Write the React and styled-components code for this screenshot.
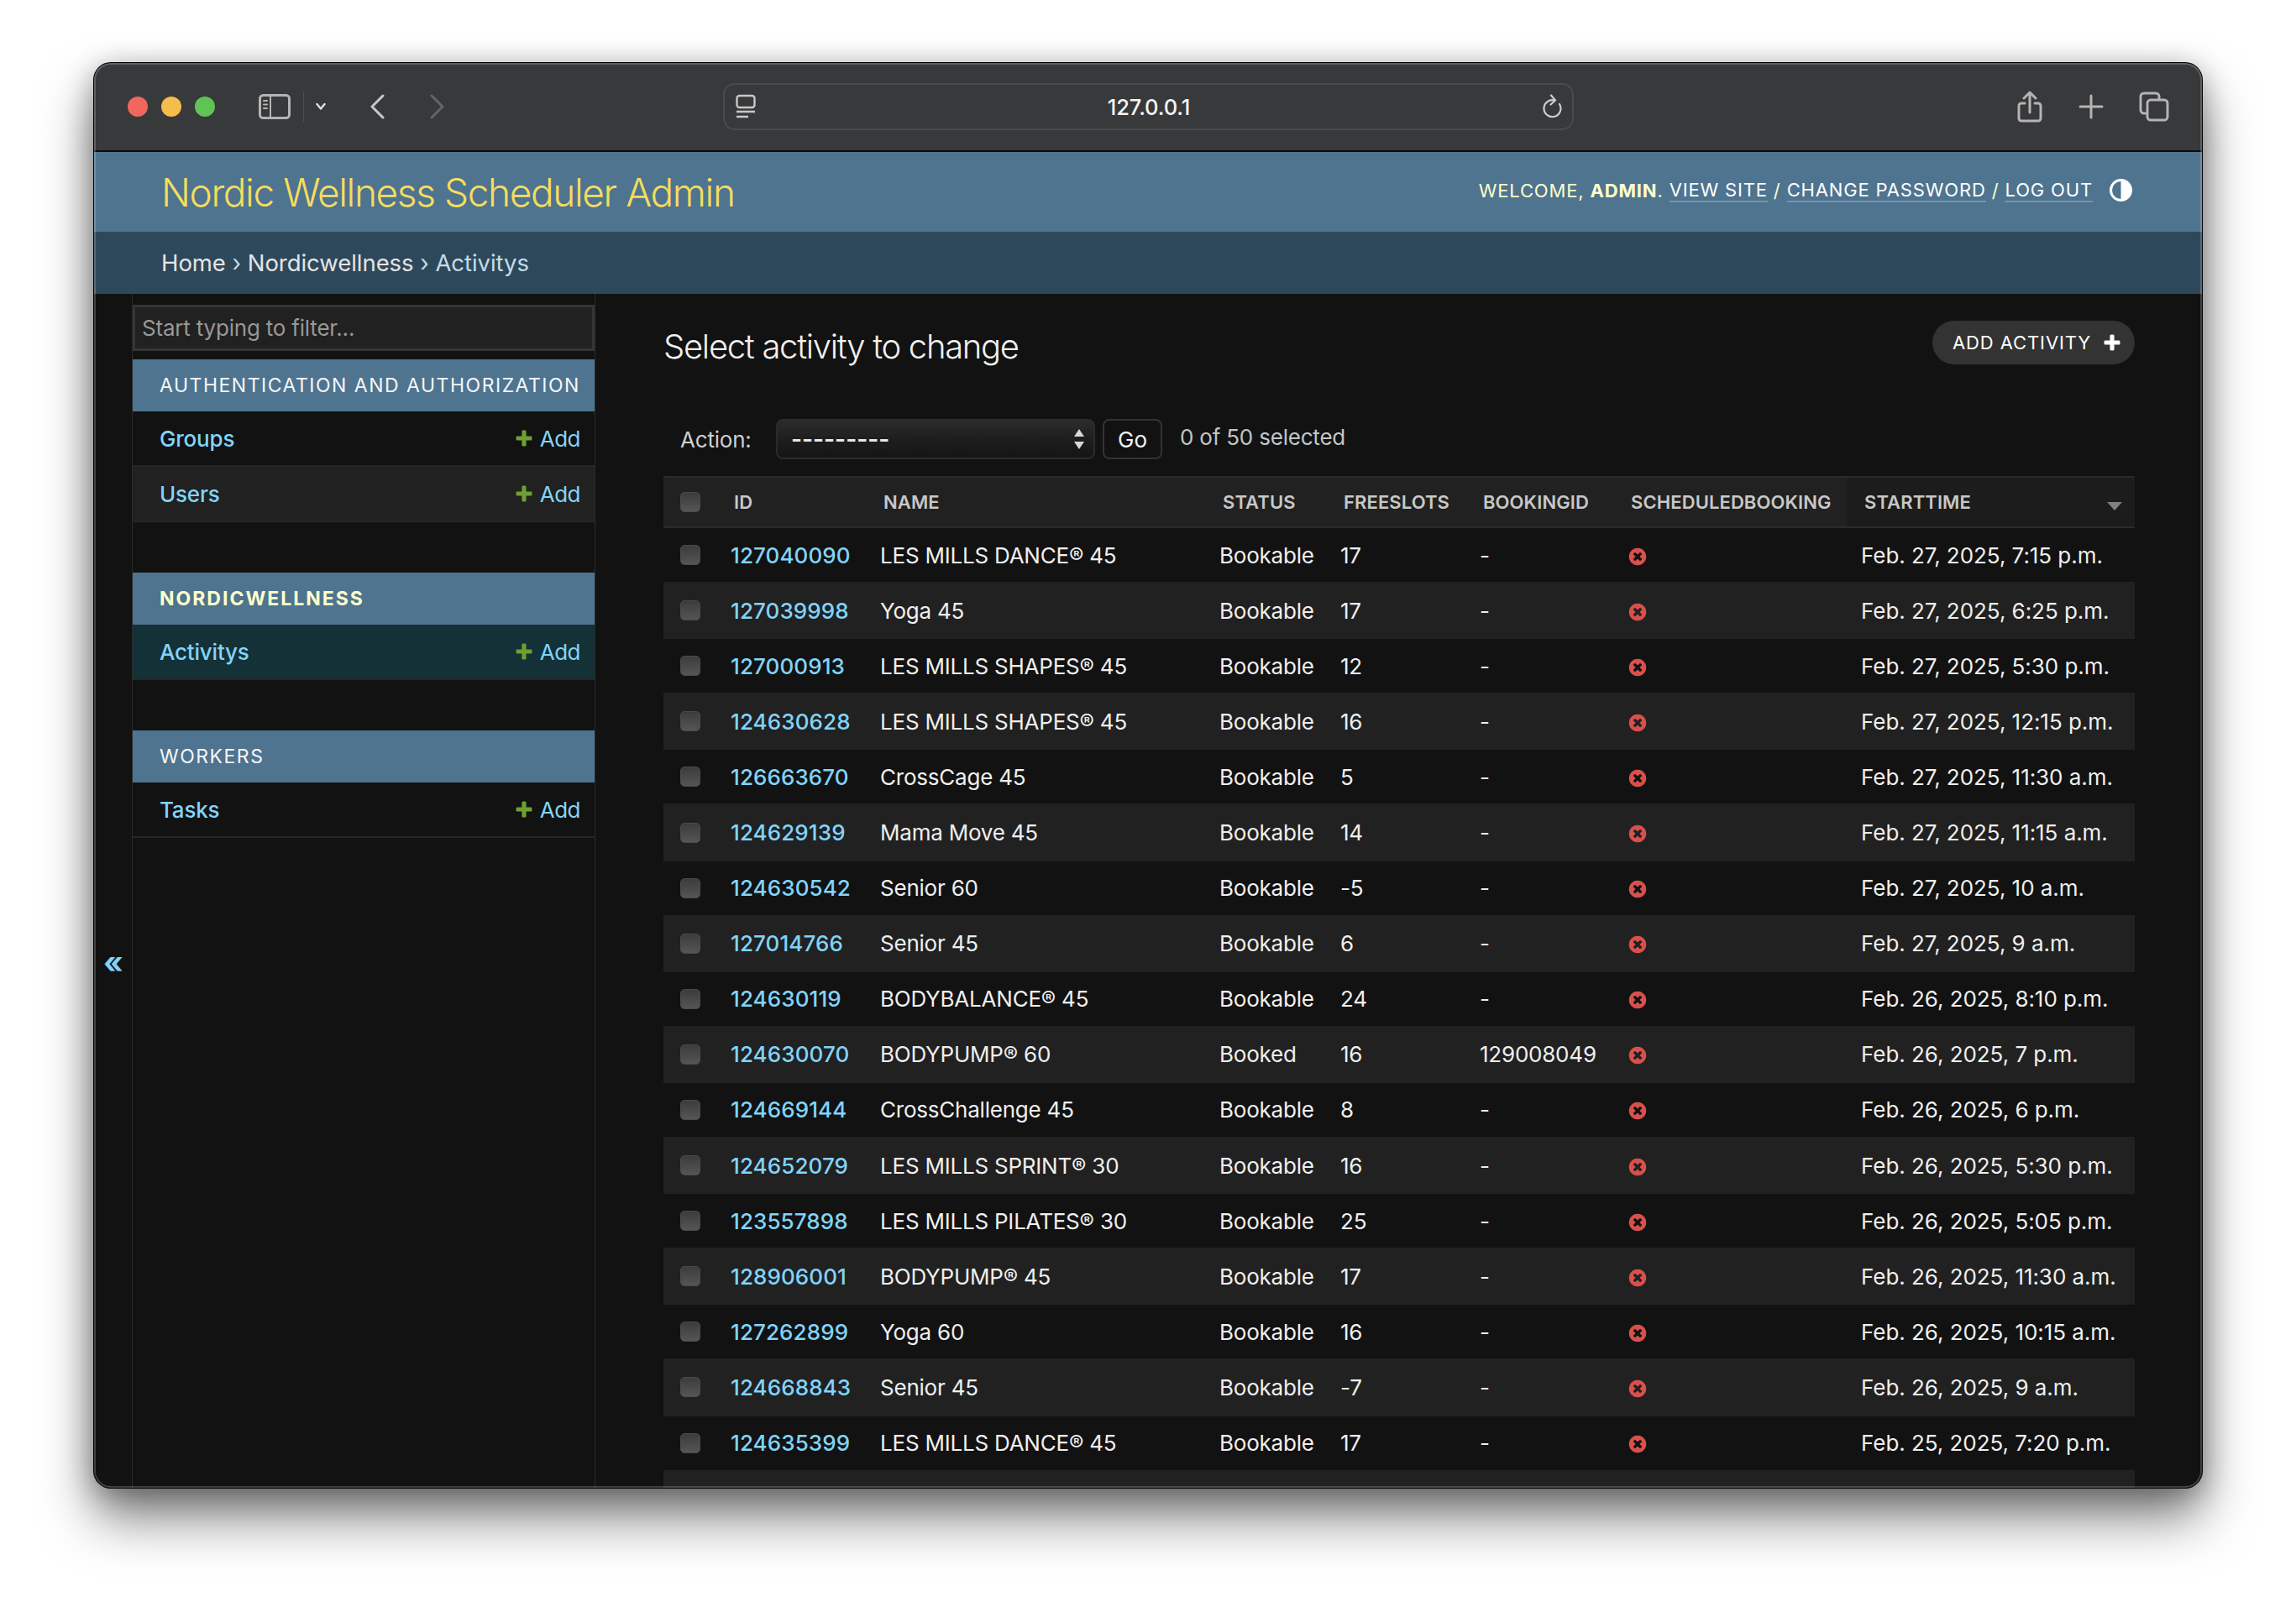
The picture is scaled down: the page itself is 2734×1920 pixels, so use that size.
import React from 'react';
import styled, { createGlobalStyle } from 'styled-components';

const GlobalStyle = createGlobalStyle`
  html, body {
    margin: 0;
    background: #fff;
  }
  body {
    font-family: Inter, "Noto Sans", "Liberation Sans", sans-serif;
    overflow: hidden;
  }
  * {
    box-sizing: border-box;
  }
`;

const Page = styled.div`
  width: 2734px;
  height: 1920px;
  padding: 75px 112px 0;
`;

const BrowserWindow = styled.div`
  height: 1697px;
  display: flex;
  flex-direction: column;
  position: relative;
  background: #121212;
  border-radius: 20px;
  overflow: hidden;
  box-shadow: 0 0 0 1px #000, 0 36px 62px rgba(0, 0, 0, 0.5), 0 6px 34px rgba(0, 0, 0, 0.32);

  /* thin light rim over the content */
  &::after {
    content: '';
    position: absolute;
    inset: 0;
    border: 2px solid rgba(255, 255, 255, 0.2);
    border-radius: 20px;
    pointer-events: none;
  }
`;

/* safari chrome */
const Toolbar = styled.div`
  height: 106px;
  flex: none;
  display: flex;
  align-items: center;
  background: #38393b;
  border-bottom: 2px solid #0c0c0c;
  padding-left: 40px;
`;

const Light = styled.span`
  width: 24px;
  height: 24px;
  border-radius: 50%;
  margin-right: 16px;
  background: ${(p) => p.$color};
`;

const ToolIcon = styled.svg`
  flex: none;
  display: block;
  margin-left: ${(p) => p.$left || 0}px;
  fill: none;
  stroke: ${(p) => p.$stroke || '#b4b4b5'};
  stroke-width: ${(p) => p.$weight || 3};
  stroke-linecap: round;
  stroke-linejoin: round;
`;

const Divider = styled.span`
  width: 1px;
  height: 36px;
  background: #4d4e50;
  margin-left: 15px;
`;

const UrlBar = styled.div`
  width: 1013px;
  height: 56px;
  margin-left: 331px;
  flex: none;
  display: flex;
  align-items: center;
  justify-content: space-between;
  padding: 0 12px 0 13px;
  border: 2px solid #4a4b4d;
  border-radius: 14px;
`;

const UrlText = styled.span`
  color: #f4f4f4;
  font-size: 25.500px;
  font-weight: 500;
  letter-spacing: -0.1px;
`;

/* django header */
const Header = styled.header`
  height: 95px;
  flex: none;
  display: flex;
  align-items: center;
  justify-content: space-between;
  padding: 0 83px 0 80px;
  background: #4f748f;
`;

const Brand = styled.h1`
  margin: 0;
  color: #f5dd5d;
  font-size: 46px;
  font-weight: 300;
  letter-spacing: -1.4px;
`;

const UserTools = styled.div`
  display: flex;
  align-items: center;
  color: #ffc;
  font-size: 22px;
  font-weight: 400;
  letter-spacing: 0.84px;
  text-transform: uppercase;
  white-space: pre;
  padding-bottom: 4px;
`;

const Strong = styled.strong`
  font-weight: 700;
`;

const ToolLink = styled.a`
  color: #fff;
  border-bottom: 2px solid #7594ab;
`;

const ThemeToggle = styled.svg`
  margin-left: 20px;
  width: 27px;
  height: 27px;
`;

const Breadcrumbs = styled.nav`
  height: 74px;
  flex: none;
  display: flex;
  align-items: center;
  padding-left: 80px;
  background: #2e485b;
  color: #c4dce8;
  font-size: 27.500px;
  letter-spacing: -0.05px;
  white-space: pre;
`;

const Crumb = styled.a`
  color: #e4e4e4;
`;

const Body = styled.div`
  flex: 1;
  min-height: 0;
  display: flex;
`;

const ToggleColumn = styled.div`
  width: 45px;
  flex: none;
  padding: 776px 0 0 11px;
  color: #81d4fa;
  font-size: 36px;
  font-weight: 700;
  line-height: 40px;
`;

const Sidebar = styled.aside`
  width: 552px;
  flex: none;
  padding-top: 13px;
  border-left: 1px solid #2a2a2a;
  border-right: 1px solid #2a2a2a;
`;

const Filter = styled.input`
  display: block;
  width: 100%;
  height: 55px;
  padding: 0 8px;
  margin-bottom: 10px;
  background: #212121;
  border: 3px solid #353535;
  color: #eee;
  font: 400 26px Inter, sans-serif;
  letter-spacing: -0.2px;

  &::placeholder {
    color: #989898;
    opacity: 1;
  }
`;

const Module = styled.section`
  margin-bottom: 60px;
`;

const Caption = styled.div`
  height: 62px;
  display: flex;
  align-items: center;
  padding-left: 32px;
  background: #4f748f;
  color: ${(p) => (p.$active ? '#ffc' : '#f4f7f9')};
  font-size: 23px;
  font-weight: ${(p) => (p.$active ? 700 : 400)};
  letter-spacing: ${(p) => (p.$active ? 2 : 1.5)}px;
  white-space: nowrap;
`;

const ModelRow = styled.div`
  height: 66px;
  display: flex;
  align-items: center;
  justify-content: space-between;
  padding: 0 17px 0 32px;
  border-bottom: 2px solid #262626;
  font-size: 26px;
  font-weight: 500;
  letter-spacing: -0.2px;
  color: #81d4fa;
  background: ${(p) => (p.$current ? '#143137' : p.$alt ? '#212121' : 'transparent')};
`;

const AddLink = styled.a`
  display: flex;
  align-items: center;
  gap: 7px;
  font-weight: 400;
  letter-spacing: -0.5px;
`;

const Main = styled.main`
  flex: 1;
  min-width: 0;
  padding: 32px 80px 0 81px;
`;

const TitleRow = styled.div`
  height: 52px;
  display: flex;
  align-items: center;
  justify-content: space-between;
  margin-bottom: 65px;
`;

const Title = styled.h2`
  margin: 0;
  color: #f0f0f0;
  font-size: 40px;
  font-weight: 300;
  letter-spacing: -1.3px;
  padding-top: 8px;
`;

const AddButton = styled.a`
  width: 241px;
  height: 52px;
  display: flex;
  align-items: center;
  gap: 13px;
  padding-left: 24px;
  border-radius: 26px;
  background: #333;
  color: #fff;
  font-size: 22px;
  letter-spacing: 0.9px;
`;

const Actions = styled.div`
  height: 48px;
  display: flex;
  align-items: center;
  padding-left: 20px;
  margin-bottom: 20px;
`;

const ActionLabel = styled.span`
  width: 114px;
  color: #cfcfcf;
  font-size: 26px;
  letter-spacing: -0.2px;
`;

const ActionSelect = styled.div`
  width: 380px;
  height: 48px;
  display: flex;
  align-items: center;
  justify-content: space-between;
  padding: 0 10px 0 16px;
  border: 2px solid #2b2b2b;
  border-radius: 8px;
  background: linear-gradient(#2c2c2c, #1e1e1e 50%, #151515);
  color: #e8e8e8;
  font-size: 28px;
  font-weight: 600;
`;

const GoButton = styled.button`
  width: 71px;
  height: 48px;
  margin-left: 9px;
  padding: 0;
  background: #121212;
  border: 2px solid #333;
  border-radius: 8px;
  color: #f2f2f2;
  font: 400 26px Inter, sans-serif;
`;

const Counter = styled.span`
  margin-left: 21px;
  padding-bottom: 6px;
  color: #c4c4c4;
  font-size: 26px;
  letter-spacing: -0.2px;
`;

const columns = '68px 178px 404px 144px 166px 176px 273px 343px';

const HeadRow = styled.div`
  display: grid;
  grid-template-columns: ${columns};
  height: 62px;
  background: #212121;
  border-top: 2px solid #2a2a2a;
  border-bottom: 2px solid #2a2a2a;
`;

const HeadCell = styled.div`
  display: flex;
  align-items: center;
  justify-content: space-between;
  padding: 0 15px 0 ${(p) => (p.$sorted ? 21 : 16)}px;
  color: #c8c8c8;
  font-size: 22px;
  font-weight: 600;
  letter-spacing: 0.1px;
  white-space: nowrap;
  background: ${(p) => (p.$sorted ? '#1c1c1c' : 'transparent')};
`;

const Row = styled.div`
  display: grid;
  grid-template-columns: ${columns};
  height: 66.1px;
  background: ${(p) => (p.$alt ? '#212121' : '#121212')};
  border-bottom: 2px solid #212121;
`;

const Cell = styled.div`
  display: flex;
  align-items: center;
  padding-left: ${(p) => (p.$last ? 17 : 12)}px;
  color: #efefef;
  font-size: 26px;
  letter-spacing: ${(p) => (p.$last ? -0.05 : -0.22)}px;
  white-space: nowrap;
`;

const IdLink = styled.a`
  color: #81d4fa;
  font-weight: 500;
  letter-spacing: 0.1px;
`;

const CheckCell = styled.div`
  display: flex;
  align-items: center;
  padding-left: 20px;
`;

const Check = styled.input.attrs({ type: 'checkbox' })`
  appearance: none;
  width: 24px;
  height: 24px;
  margin: 0;
  border-radius: 5px;
  background: linear-gradient(#3c3c3c, #555);
  border: 1px solid #4a4a4a;
`;

const PlusIcon = ({ color, size }) => (
  <svg width={size} height={size} viewBox="0 0 1792 1792">
    <path
      fill={color}
      d="M1600 796v192q0 40-28 68t-68 28h-416v416q0 40-28 68t-68 28h-192q-40 0-68-28t-28-68v-416h-416q-40 0-68-28t-28-68v-192q0-40 28-68t68-28h416v-416q0-40 28-68t68-28h192q40 0 68 28t28 68v416h416q40 0 68 28t28 68z"
    />
  </svg>
);

const NoIconSvg = styled.svg`
  margin-top: 3px;
`;

const NoIcon = () => (
  <NoIconSvg width="24" height="24" viewBox="0 0 1792 1792">
    <path
      fill="#d8504c"
      d="M1277 1122q0-26-19-45l-181-181 181-181q19-19 19-45 0-27-19-46l-90-90q-19-19-46-19-26 0-45 19l-181 181-181-181q-19-19-45-19-27 0-46 19l-90 90q-19 19-19 46 0 26 19 45l181 181-181 181q-19 19-19 45 0 27 19 46l90 90q19 19 46 19 26 0 45-19l181-181 181 181q19 19 45 19 27 0 46-19l90-90q19-19 19-46zm387-226q0 209-103 385.5t-279.5 279.5-385.5 103-385.5-103-279.5-279.5-103-385.5 103-385.5 279.5-279.5 385.5-103 385.5 103 279.5 279.5 103 385.5z"
    />
  </NoIconSvg>
);

const SortArrow = styled.svg`
  margin-top: 10px;
`;

const modules = [
  { name: 'Authentication and Authorization', label: 'AUTHENTICATION AND AUTHORIZATION', models: ['Groups', 'Users'] },
  { name: 'Nordicwellness', label: 'NORDICWELLNESS', models: ['Activitys'], active: true },
  { name: 'Workers', label: 'WORKERS', models: ['Tasks'] },
];

const activities = [
  ['127040090', 'LES MILLS DANCE® 45', 'Bookable', '17', '-', 'Feb. 27, 2025, 7:15 p.m.'],
  ['127039998', 'Yoga 45', 'Bookable', '17', '-', 'Feb. 27, 2025, 6:25 p.m.'],
  ['127000913', 'LES MILLS SHAPES® 45', 'Bookable', '12', '-', 'Feb. 27, 2025, 5:30 p.m.'],
  ['124630628', 'LES MILLS SHAPES® 45', 'Bookable', '16', '-', 'Feb. 27, 2025, 12:15 p.m.'],
  ['126663670', 'CrossCage 45', 'Bookable', '5', '-', 'Feb. 27, 2025, 11:30 a.m.'],
  ['124629139', 'Mama Move 45', 'Bookable', '14', '-', 'Feb. 27, 2025, 11:15 a.m.'],
  ['124630542', 'Senior 60', 'Bookable', '-5', '-', 'Feb. 27, 2025, 10 a.m.'],
  ['127014766', 'Senior 45', 'Bookable', '6', '-', 'Feb. 27, 2025, 9 a.m.'],
  ['124630119', 'BODYBALANCE® 45', 'Bookable', '24', '-', 'Feb. 26, 2025, 8:10 p.m.'],
  ['124630070', 'BODYPUMP® 60', 'Booked', '16', '129008049', 'Feb. 26, 2025, 7 p.m.'],
  ['124669144', 'CrossChallenge 45', 'Bookable', '8', '-', 'Feb. 26, 2025, 6 p.m.'],
  ['124652079', 'LES MILLS SPRINT® 30', 'Bookable', '16', '-', 'Feb. 26, 2025, 5:30 p.m.'],
  ['123557898', 'LES MILLS PILATES® 30', 'Bookable', '25', '-', 'Feb. 26, 2025, 5:05 p.m.'],
  ['128906001', 'BODYPUMP® 45', 'Bookable', '17', '-', 'Feb. 26, 2025, 11:30 a.m.'],
  ['127262899', 'Yoga 60', 'Bookable', '16', '-', 'Feb. 26, 2025, 10:15 a.m.'],
  ['124668843', 'Senior 45', 'Bookable', '-7', '-', 'Feb. 26, 2025, 9 a.m.'],
  ['124635399', 'LES MILLS DANCE® 45', 'Bookable', '17', '-', 'Feb. 25, 2025, 7:20 p.m.'],
];

const App = () => {
  return (
    <Page>
      <GlobalStyle />
      <BrowserWindow>
        <Toolbar>
          <Light $color="#f1675d" />
          <Light $color="#f6bd4d" />
          <Light $color="#5fc453" />
          <ToolIcon $left={36} width="38" height="30" viewBox="0 0 38 30">
            <rect x="1.5" y="1.5" width="35" height="27" rx="4" />
            <path d="M14 2v26M6 8h4M6 12.5h4M6 17h4" strokeWidth="2" />
          </ToolIcon>
          <Divider />
          <ToolIcon $left={14} width="12" height="10" viewBox="0 0 12 10" $stroke="#e0e0e0" $weight={2.4}>
            <path d="M1.5 2l4.5 5.5L10.500 2" />
          </ToolIcon>
          <ToolIcon $left={52} width="18" height="30" viewBox="0 0 18 30" $stroke="#c8c8c8">
            <path d="M16 2L3 15l13 13" />
          </ToolIcon>
          <ToolIcon $left={54} width="18" height="30" viewBox="0 0 18 30" $stroke="#626365">
            <path d="M2 2l13 13L2 28" />
          </ToolIcon>
          <UrlBar>
            <ToolIcon width="24" height="30" viewBox="0 0 24 30" $stroke="#c8c8c8" $weight={2.4}>
              <rect x="1.500" y="2" width="21" height="14" rx="3" />
              <path d="M1 21h22M1 27h14" strokeLinecap="butt" />
            </ToolIcon>
            <UrlText>127.0.0.1</UrlText>
            <ToolIcon width="24" height="30" viewBox="0 0 24 30" $stroke="#cdcdcd" $weight={2.2}>
              <path d="M15 7.500A10 10 0 1 0 21 12" />
              <path d="M11 1.500L16 7.500L10.500 12.500" />
            </ToolIcon>
          </UrlBar>
          <ToolIcon $left={528} width="30" height="38" viewBox="0 0 30 38">
            <path d="M9 15H5a3 3 0 0 0-3 3v15a3 3 0 0 0 3 3h20a3 3 0 0 0 3-3V18a3 3 0 0 0-3-3h-4M15 26V2M8 9l7-7 7 7" />
          </ToolIcon>
          <ToolIcon $left={43} width="30" height="30" viewBox="0 0 30 30">
            <path d="M15 2v26M2 15h26" />
          </ToolIcon>
          <ToolIcon $left={42} width="36" height="36" viewBox="0 0 36 36">
            <path d="M8 26H6a4 4 0 0 1-4-4V6a4 4 0 0 1 4-4h14a4 4 0 0 1 4 4v2" />
            <rect x="10" y="10" width="24" height="24" rx="4" />
          </ToolIcon>
        </Toolbar>

        <Header>
          <Brand>Nordic Wellness Scheduler Admin</Brand>
          <UserTools>
            WELCOME, <Strong>ADMIN</Strong>. <ToolLink>VIEW SITE</ToolLink> / <ToolLink>CHANGE PASSWORD</ToolLink> / <ToolLink>LOG OUT</ToolLink>
            <ThemeToggle viewBox="0 0 27 27">
              <circle cx="13.500" cy="13.500" r="12" fill="none" stroke="#fff" strokeWidth="3" />
              <path d="M13.500 1.500a12 12 0 0 1 0 24z" fill="#fff" />
            </ThemeToggle>
          </UserTools>
        </Header>

        <Breadcrumbs>
          <Crumb>Home</Crumb> › <Crumb>Nordicwellness</Crumb> › Activitys
        </Breadcrumbs>

        <Body>
          <ToggleColumn>«</ToggleColumn>
          <Sidebar>
            <Filter placeholder="Start typing to filter..." />
            {modules.map((mod) => (
              <Module key={mod.name}>
                <Caption $active={mod.active}>{mod.label}</Caption>
                {mod.models.map((model, i) => (
                  <ModelRow key={model} $alt={i % 2 === 1} $current={mod.active}>
                    {model}
                    <AddLink>
                      <PlusIcon color="#6f9f32" size={24} />
                      Add
                    </AddLink>
                  </ModelRow>
                ))}
              </Module>
            ))}
          </Sidebar>

          <Main>
            <TitleRow>
              <Title>Select activity to change</Title>
              <AddButton>
                ADD ACTIVITY
                <PlusIcon color="#fff" size={24} />
              </AddButton>
            </TitleRow>

            <Actions>
              <ActionLabel>Action:</ActionLabel>
              <ActionSelect>
                ---------
                <svg width="14" height="26" viewBox="0 0 14 26">
                  <path d="M7 1l6 9H1zM7 25l-6-9h12z" fill="#d8d8d8" />
                </svg>
              </ActionSelect>
              <GoButton>Go</GoButton>
              <Counter>0 of 50 selected</Counter>
            </Actions>

            <HeadRow>
              <CheckCell><Check /></CheckCell>
              <HeadCell>ID</HeadCell>
              <HeadCell>NAME</HeadCell>
              <HeadCell>STATUS</HeadCell>
              <HeadCell>FREESLOTS</HeadCell>
              <HeadCell>BOOKINGID</HeadCell>
              <HeadCell>SCHEDULEDBOOKING</HeadCell>
              <HeadCell $sorted>
                STARTTIME
                <SortArrow width="18" height="12" viewBox="0 0 18 12">
                  <path d="M0 1h18l-9 10z" fill="#808080" />
                </SortArrow>
              </HeadCell>
            </HeadRow>

            {activities.map(([id, name, status, slots, booking, start], i) => (
              <Row key={id} $alt={i % 2 === 1}>
                <CheckCell><Check /></CheckCell>
                <Cell><IdLink>{id}</IdLink></Cell>
                <Cell>{name}</Cell>
                <Cell>{status}</Cell>
                <Cell>{slots}</Cell>
                <Cell>{booking}</Cell>
                <Cell><NoIcon /></Cell>
                <Cell $last>{start}</Cell>
              </Row>
            ))}
            <Row $alt />
          </Main>
        </Body>
      </BrowserWindow>
    </Page>
  );
};

export default App;
